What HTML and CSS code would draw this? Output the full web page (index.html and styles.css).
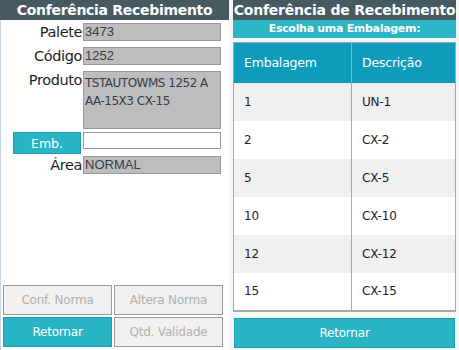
FILE: index.html
```html
<!DOCTYPE html>
<html lang="pt">
<head>
<meta charset="utf-8">
<link rel="stylesheet" href="styles.css">
</head>
<body>
<div class="page">
  <section class="left">
    <div class="title">Conferência Recebimento</div>
    <div class="form">
      <div class="row r1"><label class="lbl">Palete</label><div class="field">3473</div></div>
      <div class="row r2"><label class="lbl">Código</label><div class="field">1252</div></div>
      <div class="row r3"><label class="lbl">Produto</label><div class="field area">TSTAUTOWMS 1252 A AA-15X3 CX-15</div></div>
      <div class="row r4"><button class="emb">Emb.</button><div class="field blank"></div></div>
      <div class="row r5"><label class="lbl">Área</label><div class="field">NORMAL</div></div>
    </div>
    <div class="actions">
      <button class="btn off">Conf. Norma</button>
      <button class="btn off">Altera Norma</button>
      <button class="btn on">Retornar</button>
      <button class="btn off">Qtd. Validade</button>
    </div>
  </section>
  <section class="right">
    <div class="title">Conferência de Recebimento</div>
    <div class="sub">Escolha uma Embalagem:</div>
    <table class="grid">
      <thead><tr><th>Embalagem</th><th>Descrição</th></tr></thead>
      <tbody>
        <tr><td>1</td><td>UN-1</td></tr>
        <tr><td>2</td><td>CX-2</td></tr>
        <tr><td>5</td><td>CX-5</td></tr>
        <tr><td>10</td><td>CX-10</td></tr>
        <tr><td>12</td><td>CX-12</td></tr>
        <tr><td>15</td><td>CX-15</td></tr>
      </tbody>
    </table>
    <button class="btn on wide">Retornar</button>
  </section>
</div>
</body>
</html>
```

FILE: styles.css
```css
* { box-sizing: border-box; }
html, body { margin: 0; padding: 0; }
body {
  background: #f4f6f8;
  font-family: "DejaVu Sans", sans-serif;
  width: 459px;
  height: 350px;
  overflow: hidden;
}
.page {
  display: flex;
  gap: 4px;
  height: 350px;
}
.left {
  width: 229px;
  height: 350px;
  background: #ffffff;
  border-left: 1px solid #c9d6e6;
  display: flex;
  flex-direction: column;
}
.title {
  height: 20px;
  background: #475a61;
  color: #ffffff;
  font-weight: bold;
  font-size: 14px;
  line-height: 20px;
  text-align: center;
  white-space: nowrap;
  letter-spacing: -0.3px;
}
.left .title { margin-left: -1px; }
.form {
  display: flex;
  flex-direction: column;
  padding-top: 3px;
}
.row {
  display: flex;
  align-items: flex-start;
}
.r2, .r3 { margin-top: 6px; }
.r4 { margin-top: 3px; }
.r5 { margin-top: 2px; }
.lbl {
  width: 82px;
  padding-right: 1px;
  text-align: right;
  font-size: 14.5px;
  line-height: 18px;
  color: #1c1c2a;
  letter-spacing: -0.4px;
}
.field {
  width: 138px;
  height: 18px;
  background: #bdbdbd;
  border: 1px solid #999999;
  font-family: "Liberation Sans", Arial, sans-serif;
  font-size: 13px;
  line-height: 15px;
  color: #3a3a48;
  padding-left: 1px;
}
.field.area {
  height: 58px;
  font-family: "DejaVu Sans", sans-serif;
  font-size: 12px;
  line-height: 18px;
  letter-spacing: -0.5px;
  padding-top: 2px;
}
.field.blank {
  background: #ffffff;
  height: 17px;
}
.emb {
  margin-left: 12px;
  width: 68px;
  height: 22px;
  margin-right: 2px;
  background: #29b5c6;
  border: 1px solid #1a9eb3;
  color: #ffffff;
  font-family: "DejaVu Sans", sans-serif;
  font-size: 12.5px;
  padding: 0;
}
.actions {
  margin-top: auto;
  margin-bottom: 3px;
  margin-left: 2px;
  display: grid;
  grid-template-columns: 109px 109px;
  grid-auto-rows: 30px;
  gap: 2px;
}
.btn {
  font-family: "DejaVu Sans", sans-serif;
  font-size: 12px;
  padding: 0;
  letter-spacing: -0.2px;
}
.btn.off {
  background: #f0f0f0;
  border: 1px solid #9a9a9a;
  color: #b0b0b0;
}
.btn.on {
  background: #29b5c6;
  border: 1px solid #1a9eb3;
  color: #ffffff;
}
.right {
  width: 223px;
  display: flex;
  flex-direction: column;
}
.right .title {
  font-size: 14px;
  letter-spacing: -0.2px;
}
.sub {
  height: 18px;
  background: #2ab6c5;
  color: #ffffff;
  font-size: 11px;
  font-weight: bold;
  line-height: 18px;
  text-align: center;
  letter-spacing: -0.3px;
}
.grid {
  margin-top: 4px;
  width: 223px;
  border-collapse: collapse;
  border: 1px solid #a8a8a8;
  border-bottom: 2px solid #a8a8a8;
  font-size: 12px;
}
.grid th, .grid td {
  text-align: left;
  padding: 0 0 0 10px;
  border-left: 1px solid #a8a8a8;
  font-weight: normal;
  letter-spacing: -0.2px;
}
.grid th:first-child, .grid td:first-child { width: 118px; }
.grid th {
  height: 40px;
  background: #0e9bbc;
  color: #ffffff;
  font-size: 12.5px;
}
.grid td {
  height: 38px;
  color: #1c1c2a;
}
.grid tbody tr:nth-child(odd) td { background: #f0f0f0; }
.grid tbody tr:nth-child(even) td { background: #ffffff; }
.wide {
  margin-top: 6px;
  margin-left: 1px;
  width: 221px;
  height: 30px;
}
```
